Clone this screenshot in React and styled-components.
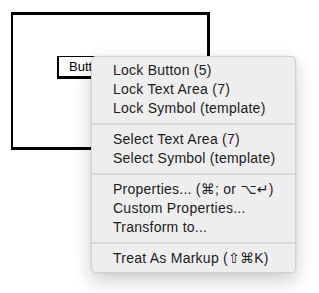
import React from 'react';
import styled, { createGlobalStyle } from 'styled-components';

const GlobalStyle = createGlobalStyle`
  html, body {
    margin: 0;
    padding: 0;
    background: #fff;
  }
`;

const Stage = styled.div`
  position: relative;
  width: 319px;
  height: 293px;
  overflow: hidden;
  padding: 12px 0 0 11px;
  box-sizing: border-box;
  font-family: 'Liberation Sans', Arial, 'DejaVu Sans', sans-serif;
`;

const SketchBox = styled.div`
  width: 199px;
  height: 138px;
  box-sizing: border-box;
  border-style: solid;
  border-color: #000;
  border-width: 3px 3px 3px 2px;
  padding: 41px 0 0 44px;
`;

const SketchButton = styled.div`
  display: inline-flex;
  align-items: center;
  height: 23px;
  padding: 0 14px 0 10px;
  box-sizing: border-box;
  border-style: solid;
  border-color: #000;
  border-width: 1px 1px 3px 2px;
  background: #fff;
  font-size: 13px;
  color: #000;
`;

const Menu = styled.div`
  position: absolute;
  left: 91px;
  top: 56px;
  width: 205px;
  box-sizing: border-box;
  padding: 4px 0;
  background: #eeeeee;
  border: 1px solid rgba(0, 0, 0, 0.12);
  border-radius: 5px;
  box-shadow: 0 8px 20px rgba(0, 0, 0, 0.2), 0 0 3px rgba(0, 0, 0, 0.08);
  font-size: 14px;
  letter-spacing: 0.25px;
  color: #1c1c1c;
`;

const Item = styled.div`
  height: 19px;
  line-height: 19px;
  padding-left: 21px;
  white-space: nowrap;
`;

const Separator = styled.div`
  height: 2px;
  margin: 5px 0 5px;
  background: #d9d9d9;
`;

const groups = [
  ['Lock Button (5)', 'Lock Text Area (7)', 'Lock Symbol (template)'],
  ['Select Text Area (7)', 'Select Symbol (template)'],
  ['Properties... (⌘; or ⌥↵)', 'Custom Properties...', 'Transform to...'],
  ['Treat As Markup (⇧⌘K)'],
];

export default function App() {
  return (
    <Stage>
      <GlobalStyle />
      <SketchBox>
        <SketchButton>Button</SketchButton>
      </SketchBox>
      <Menu>
        {groups.map((items, i) => (
          <React.Fragment key={i}>
            {i > 0 && <Separator />}
            {items.map((label) => (
              <Item key={label}>{label}</Item>
            ))}
          </React.Fragment>
        ))}
      </Menu>
    </Stage>
  );
}
